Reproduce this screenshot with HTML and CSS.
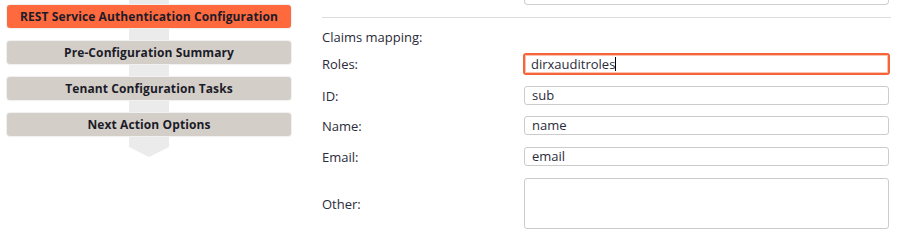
FILE: index.html
```html
<!DOCTYPE html>
<html>
<head>
<meta charset="utf-8">
<link rel="stylesheet" href="styles.css">
</head>
<body>
<div class="page">
  <div class="steps">
    <div class="track"><div class="track-bar"></div><div class="track-arrow"></div></div>
    <div class="step active">REST Service Authentication Configuration</div>
    <div class="step">Pre-Configuration Summary</div>
    <div class="step">Tenant Configuration Tasks</div>
    <div class="step">Next Action Options</div>
  </div>
  <div class="form">
    <div class="cut-input"></div>
    <div class="sep"></div>
    <div class="heading">Claims mapping:</div>
    <div class="row first">
      <div class="label">Roles:</div>
      <div class="field focus">dirxauditroles<span class="caret"></span></div>
    </div>
    <div class="row">
      <div class="label">ID:</div>
      <div class="field">sub</div>
    </div>
    <div class="row">
      <div class="label">Name:</div>
      <div class="field">name</div>
    </div>
    <div class="row wide">
      <div class="label">Email:</div>
      <div class="field">email</div>
    </div>
    <div class="row wide">
      <div class="label">Other:</div>
      <div class="field area"></div>
    </div>
  </div>
</div>
</body>
</html>
```
FILE: styles.css
```css
html, body { margin: 0; padding: 0; background: #fff; }
body { font-family: "Open Sans", "Noto Sans", sans-serif; color: #2b2b3a; }
.page { display: flex; width: 900px; height: 237px; overflow: hidden; }

.steps { position: relative; width: 300px; padding-top: 5px; display: flex; flex-direction: column; gap: 13px; align-items: flex-start; }
.track { position: absolute; left: 129px; top: 0; width: 40px; }
.track-bar { width: 40px; height: 147px; background: #ebebeb; }
.track-arrow { width: 0; height: 0; border-left: 20px solid transparent; border-right: 20px solid transparent; border-top: 10px solid #ebebeb; }
.step { position: relative; margin-left: 7px; width: 284px; height: 23px; line-height: 23px; text-align: center; font-weight: 700; font-size: 12px; letter-spacing: 0.1px; color: #1c1c28; background: #d3cfc8; border-radius: 3px; box-shadow: 0 0 0 1px #f1f1f1; }
.step.active { background: #ff693e; }

.form { flex: 1; padding-left: 22px; padding-right: 9px; display: flex; flex-direction: column; }
.cut-input { margin-left: 202px; margin-right: 2px; height: 4px; border: 1px solid #cfcfcf; border-top: none; border-radius: 0 0 4px 4px; }
.sep { height: 1px; background: #dcdcdc; margin-top: 12px; }
.heading { font-size: 13px; margin-top: 10px; height: 18px; line-height: 18px; }
.row { display: flex; align-items: center; margin-top: 11px; }
.row.first { margin-top: 7px; }
.row.wide { margin-top: 12px; }
.label { width: 202px; font-size: 13px; }
.field { box-sizing: border-box; width: 365px; height: 19px; border: 1px solid #cccccc; border-radius: 3px; font-size: 13px; line-height: 17px; padding-left: 7px; color: #2b2b3a; }
.field.focus { height: 22px; width: 367px; margin-left: -1px; border: 2px solid #f5643a; box-shadow: inset 0 0 0 1px #fbc3b0; line-height: 18px; padding-left: 6px; }
.caret { display: inline-block; width: 1px; height: 14px; background: #000; vertical-align: -2px; }
.field.area { height: 51px; }
```
